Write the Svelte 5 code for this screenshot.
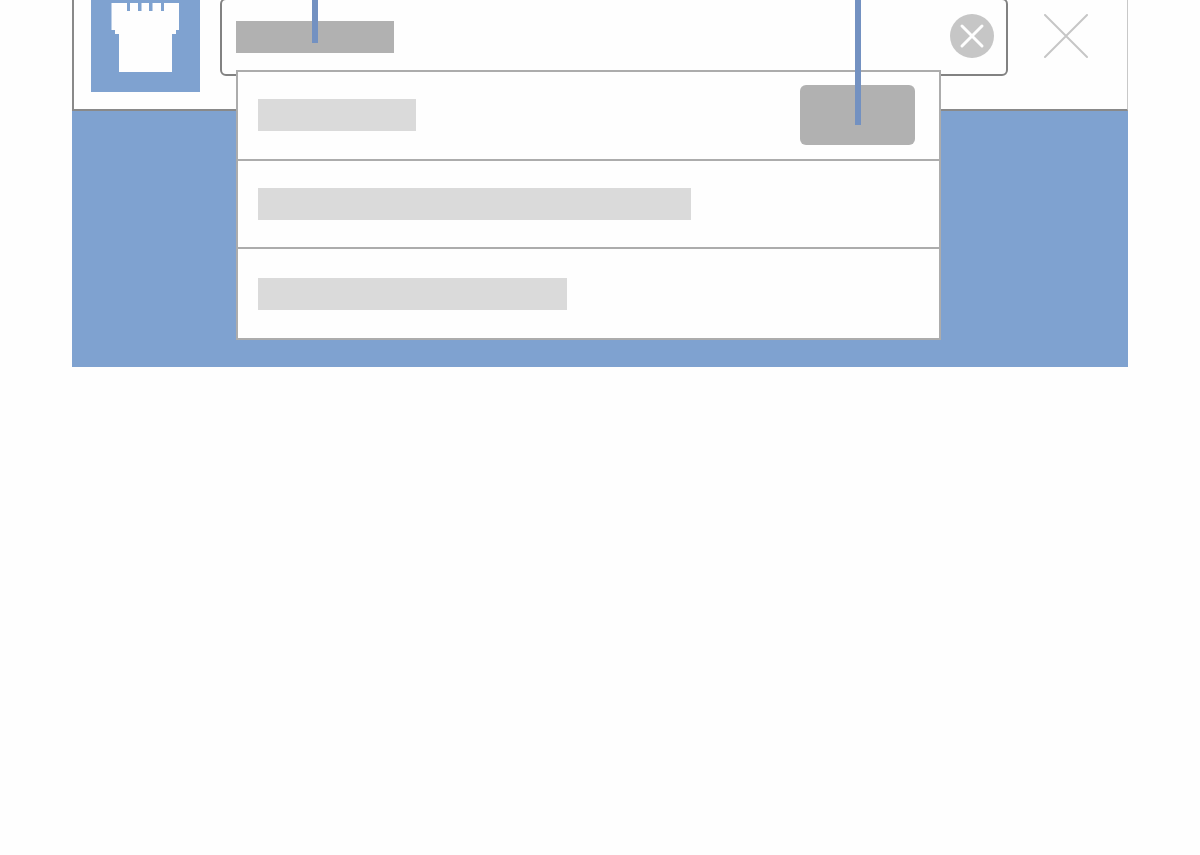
<script>
  let query = '';
  let open = true;

  // width is the length of the placeholder bar in each row
  const suggestions = [
    { id: 1, width: 158, action: true },
    { id: 2, width: 433, action: false },
    { id: 3, width: 309, action: false },
  ];

  function clearQuery() {
    query = '';
  }

  function closeSearch() {
    open = false;
  }
</script>

<style>
  :global(body) {
    background-color: #fefefe;
    font-family: Arial, "Liberation Sans", sans-serif;
  }

  * {
    box-sizing: border-box;
  }

  .window {
    margin: -37px 6% 0;
  }

  .header {
    display: flex;
    align-items: center;
    height: 148px;
    padding: 0 39px 0 17px;
    background-color: #fefefe;
    border: 2px solid #898989;
    border-right: 1px solid #c8c8c8;
  }

  .logo {
    display: block;
    width: 109px;
    height: 110px;
    background-color: #7fa2d0;
  }

  .logo svg,
  .clear svg,
  .close svg {
    display: block;
  }

  .search {
    position: relative;
    flex: 1;
    margin: 0 36px 0 20px;
  }

  .field {
    display: flex;
    align-items: center;
    height: 78px;
    padding: 0 12px 0 14px;
    border: 2px solid #828282;
    border-radius: 6px;
  }

  .bar {
    height: 32px;
    background-color: #dadada;
  }

  .typed {
    position: relative;
    width: 158px;
    background-color: #b1b1b1;
  }

  .field input {
    flex: 1;
    min-width: 0;
    height: 48px;
    padding: 0 12px;
    border: none;
    outline: none;
    background: transparent;
    font-size: 24px;
  }

  button {
    padding: 0;
    border: none;
    background: none;
    cursor: pointer;
  }

  .results {
    position: absolute;
    z-index: 1;
    top: 72px;
    left: 16px;
    right: 67px;
    display: grid;
    grid-template-rows: repeat(3, 1fr);
    height: 270px;
    margin: 0;
    padding: 0;
    list-style: none;
    background-color: #fefefe;
    border: 2px solid #acacac;
  }

  .results li {
    display: flex;
    align-items: center;
    justify-content: space-between;
    padding: 0 24px 0 20px;
    border-bottom: 2px solid #acacac;
  }

  .results li:last-child {
    border-bottom: none;
  }

  .action {
    position: relative;
    width: 115px;
    height: 60px;
    border-radius: 6px;
    background-color: #b1b1b1;
  }

  /* callout lines that come down from above the page */
  .pointer {
    position: absolute;
    left: 50%;
    bottom: 10px;
    width: 6px;
    height: 60px;
    margin-left: -3px;
    background-color: #7391c1;
  }

  .action .pointer {
    bottom: 20px;
    height: 140px;
  }

  .content {
    height: 256px;
    background-color: #7fa2d0;
  }
</style>

<div class="window">
  <header class="header">
    <a class="logo" href="/" aria-label="Home">
      <svg width="109" height="110" viewBox="0 0 109 110">
        <path fill="#fefefe" d="M20.5 21H36v8h3v-8h8v8h3.500v-8H58v8h3.500v-8H70v8h3v-8h15v27h-3v4h-4v38H28V52h-4v-4h-3.500z" />
      </svg>
    </a>

    <div class="search">
      <div class="field">
        <div class="bar typed"><span class="pointer"></span></div>
        <input type="text" aria-label="Search" bind:value={query} />
        <button class="clear" aria-label="Clear" on:click={clearQuery}>
          <svg width="44" height="46" viewBox="0 0 44 46">
            <circle cx="22" cy="22" r="22" fill="#c6c6c6" />
            <path d="M12 12l20 20M32 12L12 32" stroke="#fefefe" stroke-width="3" stroke-linecap="round" />
          </svg>
        </button>
      </div>

      {#if open}
        <ul class="results">
          {#each suggestions as item (item.id)}
            <li>
              <div class="bar" style="width: {item.width}px"></div>
              {#if item.action}
                <button class="action" aria-label="Select"><span class="pointer"></span></button>
              {/if}
            </li>
          {/each}
        </ul>
      {/if}
    </div>

    <button class="close" aria-label="Close" on:click={closeSearch}>
      <svg width="44" height="46" viewBox="0 0 44 46">
        <path d="M1 1l42 42M43 1L1 43" stroke="#c6c6c6" stroke-width="2" stroke-linecap="round" />
      </svg>
    </button>
  </header>

  <main class="content"></main>
</div>
